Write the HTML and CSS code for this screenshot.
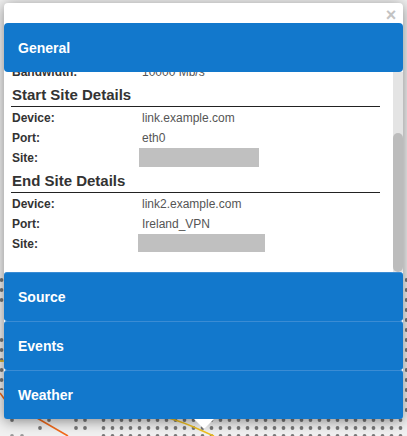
FILE: index.html
```html
<!DOCTYPE html>
<html lang="en">
<head>
  <meta charset="UTF-8" />
  <meta name="viewport" content="width=device-width, initial-scale=1.0"/>
  <title>Link Details</title>
  <link rel="stylesheet" href="styles.css">
</head>
<body>
  <!-- map behind the popup -->
  <svg class="map" width="407" height="436" viewBox="0 0 407 436">
    <defs>
      <filter id="soft" x="-5%" y="-5%" width="110%" height="110%">
        <feGaussianBlur stdDeviation="0.5"/>
      </filter>
      <pattern id="dots" x="0" y="0" width="9" height="8" patternUnits="userSpaceOnUse">
        <circle cx="4.5" cy="4" r="1.9" fill="#777"/>
      </pattern>
      <pattern id="sideDots" x="0" y="0" width="9" height="10" patternUnits="userSpaceOnUse">
        <circle cx="1.5" cy="0" r="1.9" fill="#777"/>
        <circle cx="1.5" cy="10" r="1.9" fill="#777"/>
      </pattern>
    </defs>
    <g filter="url(#soft)">
      <rect x="99" y="416" width="308" height="24" fill="url(#dots)"/>
      <rect x="0" y="275" width="4" height="30" fill="url(#sideDots)"/>
      <rect x="0" y="335" width="4" height="55" fill="url(#sideDots)"/>
      <rect x="403" y="275" width="4" height="140" fill="url(#sideDots)"/>
      <circle cx="40" cy="428" r="1.9" fill="#777"/>
      <circle cx="76" cy="428" r="1.9" fill="#777"/>
      <circle cx="85" cy="428" r="1.9" fill="#777"/>
      <circle cx="12" cy="420" r="1.9" fill="#777"/>
      <circle cx="49" cy="420" r="1.9" fill="#777"/>
      <circle cx="76" cy="420" r="1.9" fill="#777"/>
      <circle cx="85" cy="420" r="1.9" fill="#777"/>
      <circle cx="12" cy="436" r="1.9" fill="#999"/>
      <circle cx="22" cy="436" r="1.9" fill="#999"/>
    </g>
    <path d="M0 393 L8 404 M37 418 L68 436" stroke="#f26a1b" stroke-width="1.6" fill="none"/>
    <path d="M168 418 C185 422 200 430 214 436 M0 361 L4 361" stroke="#f0c020" stroke-width="1.6" fill="none"/>
  </svg>

  <div class="popup">
    <div class="popup-top">
      <span class="close">&times;</span>
    </div>

    <div class="panel general">General</div>
    <div class="panel-body">
      <div class="scroll-content">
        <div class="inner">
          <div class="row"><span class="label">Bandwidth:</span><span class="value">10000 Mb/s</span></div>

          <h3>Start Site Details</h3>
          <div class="row"><span class="label">Device:</span><span class="value">link.example.com</span></div>
          <div class="row"><span class="label">Port:</span><span class="value">eth0</span></div>
          <div class="row">
            <span class="label">Site:</span>
            <span class="redacted first"></span>
          </div>

          <h3>End Site Details</h3>
          <div class="row"><span class="label">Device:</span><span class="value">link2.example.com</span></div>
          <div class="row"><span class="label">Port:</span><span class="value">Ireland_VPN</span></div>
          <div class="row">
            <span class="label">Site:</span>
            <span class="redacted second"></span>
          </div>
        </div>
      </div>
      <div class="scrollbar"><div class="thumb"></div></div>
    </div>
    <div class="panel closed">Source</div>
    <div class="panel closed">Events</div>
    <div class="panel closed">Weather</div>
    <div class="tip"></div>
  </div>
</body>
</html>
```

FILE: styles.css
```css
html, body {
  height: 100%;
}
body {
  font-family: "Liberation Sans", Arial, sans-serif;
  background: #f1f1f1;
  margin: 0;
  padding: 3px 4px 0;
  overflow: hidden;
}
.map {
  position: absolute;
  top: 0;
  left: 0;
}
.popup {
  position: relative;
  width: 399px;
  background: #fff;
  border-radius: 4px;
  box-shadow: 0 2px 14px rgba(0,0,0,0.45);
}
.popup-top {
  height: 20px;
  display: flex;
  justify-content: flex-end;
}
.close {
  width: 24px;
  text-align: center;
  color: #c3c3c3;
  font-size: 18px;
  font-weight: bold;
  line-height: 24px;
}
.panel {
  height: 49px;
  box-sizing: border-box;
  padding-left: 14px;
  line-height: 49px;
  background: #1278cc;
  color: #fff;
  font-size: 14px;
  font-weight: bold;
  border-radius: 4px;
}
.panel.general {
  line-height: 51px;
}
.panel.closed {
  border-top: 1px solid #3a8cd4;
  border-radius: 3px;
}
.panel-body {
  height: 200px;
  display: flex;
}
.scroll-content {
  flex: 1;
  overflow: hidden;
}
.inner {
  margin-top: -10px;
  padding: 0 13px 0 8px;
}
.row {
  display: flex;
  height: 20px;
  line-height: 20px;
  font-size: 12px;
  color: #555;
}
.label {
  width: 130px;
  font-weight: bold;
  color: #333;
}
h3 {
  margin: 0 0 1px -1px;
  padding-left: 1px;
  height: 25px;
  box-sizing: border-box;
  line-height: 26px;
  font-size: 15px;
  color: #333;
  border-bottom: 1px solid #222;
}
.redacted {
  display: block;
  background: #c0c0c0;
}
.redacted.first {
  width: 120px;
  height: 19px;
  margin-left: -3px;
}
.redacted.second {
  width: 127px;
  height: 18px;
  margin-left: -4px;
}
.scrollbar {
  width: 10px;
  background: #e4e4e4;
}
.thumb {
  height: 139px;
  margin-top: 61px;
  background: #bcbcbc;
  border-radius: 5px;
}
.tip {
  position: absolute;
  left: 190px;
  top: 100%;
  width: 20px;
  height: 10px;
  background: #fff;
  clip-path: polygon(0 0, 100% 0, 50% 100%);
}
```
